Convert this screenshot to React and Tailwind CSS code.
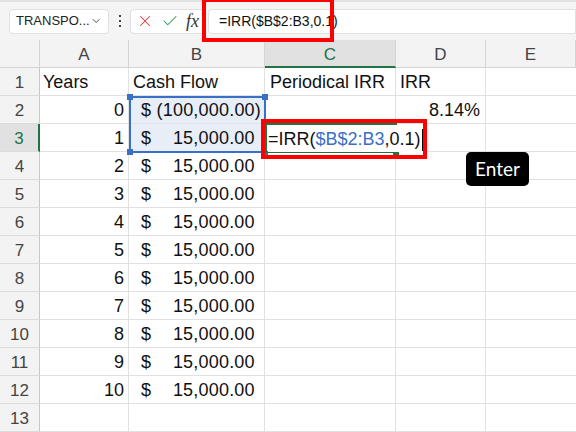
import React from 'react';
import { ChevronDown, X, Check } from 'lucide-react';

const cols = [
  { key: 'A', w: 'w-[89px]' },
  { key: 'B', w: 'w-[136px]' },
  { key: 'C', w: 'w-[131px]' },
  { key: 'D', w: 'w-[90px]' },
  { key: 'E', w: 'w-[90px]' },
];

const rows = [
  { a: 'Years', b: { label: 'Cash Flow' }, c: 'Periodical IRR', d: 'IRR' },
  { a: 0, b: { amt: '(100,000.00)', neg: true }, d: '8.14%' },
  { a: 1, b: { amt: '15,000.00' } },
  ...[2, 3, 4, 5, 6, 7, 8, 9, 10].map((n) => ({ a: n, b: { amt: '15,000.00' } })),
  {},
];

function CashCell({ b }) {
  if (!b) return null;
  if (b.label) return <span className="pl-[4px]">{b.label}</span>;
  return (
    <div className="flex w-full items-center justify-between pl-[12px] pr-[3px]">
      <span>$</span>
      <span className="tracking-[0.2px]">
        {b.amt}
        {!b.neg && <span className="invisible">)</span>}
      </span>
    </div>
  );
}

export default function App() {
  return (
    <div
      className="relative h-[432px] w-[576px] overflow-hidden bg-white text-[#111]"
      style={{ fontFamily: '"Liberation Sans", Arial, sans-serif' }}
    >
      {/* Toolbar */}
      <div className="flex h-[40px] items-center border-t-2 border-[#e2e2e2] bg-[#f4f4f4] pl-[9px]">
        <div className="flex h-[25px] w-[100px] items-center justify-between rounded-[4px] border border-[#e0e0e0] bg-white pl-[6px] pr-[6px] text-[13px] text-[#222]">
          <span>TRANSPO...</span>
          <ChevronDown size={14} strokeWidth={1.8} className="text-[#444]" />
        </div>
        <div className="flex w-[21px] flex-col items-center gap-[3px]">
          <span className="h-[2px] w-[2px] bg-[#444]" />
          <span className="h-[2px] w-[2px] bg-[#444]" />
          <span className="h-[2px] w-[2px] bg-[#444]" />
        </div>
        <div className="flex h-[25px] w-[76px] items-center gap-[7px] rounded-l-[4px] border border-[#e0e0e0] bg-white pl-[5px]">
          <X size={18} strokeWidth={1.4} className="text-[#e03a3a]" />
          <Check size={18} strokeWidth={1.4} className="text-[#2e9a4a]" />
          <span
            className="text-[18px] italic text-[#333]"
            style={{ fontFamily: '"Liberation Serif", serif' }}
          >
            fx
          </span>
        </div>
        <div className="ml-[2px] flex h-[25px] flex-1 items-center rounded-l-[4px] border border-[#e0e0e0] bg-white pl-[10px] text-[14px] text-[#111]">
          =IRR($B$2:B3,0.1)
        </div>
      </div>

      {/* Column headers */}
      <div className="flex h-[28px] bg-[#f3f3f3] text-[17px] text-[#444]">
        <div className="w-[40px] border-b border-r border-[#d4d4d4]" />
        {cols.map((c) => (
          <div
            key={c.key}
            className={`${c.w} flex items-center justify-center border-r border-[#d4d4d4] pt-[3px] ${
              c.key === 'C'
                ? 'border-b-2 border-b-[#217346] bg-[#e1e1e1] text-[#217346]'
                : 'border-b border-b-[#d4d4d4]'
            }`}
          >
            {c.key}
          </div>
        ))}
      </div>

      {/* Rows */}
      {rows.map((r, i) => {
        const n = i + 1;
        const active = n === 3;
        const sel = n === 2 || n === 3;
        return (
          <div key={n} className="flex h-[28px] text-[18px]">
            <div
              className={`flex w-[40px] items-center justify-center border-b border-[#dcdcdc] pt-[2px] text-[17px] ${
                active
                  ? 'border-r-2 border-r-[#217346] bg-[#e1e1e1] text-[#217346]'
                  : 'border-r border-r-[#c8c8c8] bg-[#f3f3f3] text-[#444]'
              }`}
            >
              {n}
            </div>
            <div
              className={`flex w-[89px] items-center border-b border-r border-[#e1e1e1] pt-[2px] ${
                typeof r.a === 'number' ? 'justify-end pr-[4px]' : 'pl-[3px]'
              }`}
            >
              {r.a}
            </div>
            <div
              className={`flex w-[136px] items-center border-b border-r border-[#e1e1e1] pt-[2px] ${
                sel ? 'bg-[#e8eef8]' : ''
              }`}
            >
              <CashCell b={r.b} />
            </div>
            <div className="flex w-[131px] items-center border-b border-r border-[#e1e1e1] pl-[5px] pt-[2px]">
              {r.c}
            </div>
            <div
              className={`flex w-[90px] items-center border-b border-r border-[#e1e1e1] pt-[2px] ${
                n === 2 ? 'justify-end pr-[5px]' : 'pl-[4px]'
              }`}
            >
              {r.d}
            </div>
            <div className="w-[90px] border-b border-[#e1e1e1]" />
          </div>
        );
      })}

      {/* Selection B2:B3 */}
      <div className="pointer-events-none absolute left-[129px] top-[96px] h-[57px] w-[137px] border-2 border-[#3a6fc6]">
        <span className="absolute -left-[4px] -top-[4px] h-[6px] w-[6px] bg-[#3a6fc6]" />
        <span className="absolute -right-[4px] -top-[4px] h-[6px] w-[6px] bg-[#3a6fc6]" />
        <span className="absolute -bottom-[4px] -left-[4px] h-[6px] w-[6px] bg-[#3a6fc6]" />
        <span className="absolute -bottom-[4px] -right-[4px] h-[6px] w-[6px] bg-[#3a6fc6]" />
      </div>

      {/* Editing cell C3 */}
      <div className="absolute left-[265px] top-[123px] h-[30px] w-[132px] border-2 border-[#217346] bg-white">
        <span className="absolute -bottom-[4px] -right-[4px] h-[6px] w-[6px] bg-[#217346]" />
      </div>
      <div className="absolute left-[268px] top-[125px] flex h-[27px] items-center bg-white pr-[1px] pt-[2px] text-[18px]">
        <span>=IRR(</span>
        <span className="text-[#3a6fc6]">$B$2:B3</span>
        <span>,0.1)</span>
        <span className="ml-[1px] h-[22px] w-[1px] bg-black" />
      </div>

      {/* Red highlight boxes */}
      <div className="absolute left-[261px] top-[119px] h-[40px] w-[166px] border-[4px] border-[#ff0000]" />
      <div className="absolute left-[202px] -top-[2px] h-[44px] w-[132px] border-[4px] border-[#ff0000]" />

      {/* Enter key badge */}
      <div
        className="absolute left-[466px] top-[152px] flex h-[34px] w-[63px] items-center justify-center rounded-[5px] bg-black text-[19px] text-white"
        style={{ fontFamily: 'Lato, "DejaVu Sans", sans-serif' }}
      >
        Enter
      </div>
    </div>
  );
}
